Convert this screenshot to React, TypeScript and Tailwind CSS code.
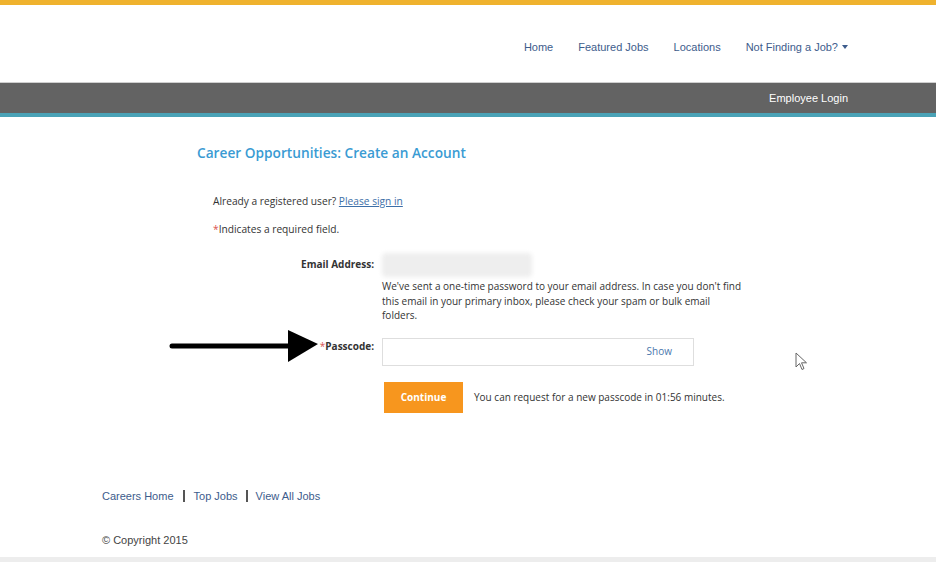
import React from "react";

const body = { fontFamily: '"Open Sans", "DejaVu Sans", sans-serif' };
const arial = { fontFamily: '"Liberation Sans", Arial, sans-serif' };

export default function App() {
  return (
    <div className="relative w-[936px] h-[562px] overflow-hidden bg-white flex flex-col">
      <div className="h-[5px] bg-[#efb22e]" />
      <header className="h-[77px] flex items-start justify-end pr-[88px] pt-[34px]" style={arial}>
        <nav className="flex items-center gap-[25px] text-[11px] text-[#3d5c8c]">
          <span>Home</span>
          <span>Featured Jobs</span>
          <span>Locations</span>
          <span className="flex items-center gap-[4px]">
            Not Finding a Job?
            <span className="inline-block w-0 h-0 border-l-[3px] border-r-[3px] border-t-[4px] border-l-transparent border-r-transparent border-t-[#3d5c8c]" />
          </span>
        </nav>
      </header>
      <div className="h-[1px] bg-[#cfcfcf]" />
      <div className="h-[30px] bg-[#636363] flex items-center justify-end pr-[88px]" style={arial}>
        <span className="text-[11px] text-white">Employee Login</span>
      </div>
      <div className="h-[4px] bg-[#4aa2b6]" />

      <main className="flex flex-col pl-[197px] pt-[27px]" style={body}>
        <h1 className="text-[13.7px] font-semibold text-[#3a9bd3] leading-[18px]">
          Career Opportunities: Create an Account
        </h1>
        <div className="pl-[16px] mt-[32px] text-[10.2px] text-[#333] leading-[14px]">
          <p>
            Already a registered user?{" "}
            <span className="text-[#3d6fa8] underline">Please sign in</span>
          </p>
          <p className="mt-[14px]">
            <span className="text-[#d9534f]">*</span>Indicates a required field.
          </p>
        </div>

        <div className="mt-[17px] flex flex-col text-[10px] text-[#333]">
          <div className="flex">
            <div className="w-[177px] text-right font-bold pt-[4px] leading-[14px]">Email Address:</div>
            <div className="ml-[8px] flex flex-col">
              <div className="w-[150px] h-[24px] rounded-[4px] bg-[#eeeeee] blur-[2px]" />
              <p className="mt-[2px] w-[364px] leading-[14.5px]">
                We've sent a one-time password to your email address. In case you don't find this email in your primary inbox, please check your spam or bulk email folders.
              </p>
            </div>
          </div>

          <div className="flex mt-[15px]">
            <div className="w-[177px] text-right font-bold pt-[1px] leading-[14px]">
              <span className="text-[#d9534f] font-normal">*</span>Passcode:
            </div>
            <div className="ml-[8px] w-[312px] h-[28px] border border-[#dedede] flex items-center justify-end pr-[21px]">
              <span className="text-[#4a78ad]">Show</span>
            </div>
          </div>

          <div className="flex items-center mt-[16px] pl-[187px]">
            <div className="w-[79px] h-[31px] bg-[#f7961e] flex items-center justify-center text-white font-bold text-[10px]">
              Continue
            </div>
            <span className="ml-[11px]">You can request for a new passcode in 01:56 minutes.</span>
          </div>
        </div>
      </main>

      <footer className="mt-auto flex flex-col pl-[102px]" style={arial}>
        <div className="flex items-center text-[11px] text-[#3d5c8c]">
          <span>Careers Home</span>
          <span className="mx-[9px] w-[2px] h-[12px] bg-[#555]" />
          <span>Top Jobs</span>
          <span className="mx-[8px] w-[2px] h-[12px] bg-[#555]" />
          <span>View All Jobs</span>
        </div>
        <div className="mt-[27px] mb-[9px] text-[11px] text-[#444]">© Copyright 2015</div>
      </footer>
      <div className="h-[5px] bg-[#ededed]" />

      {/* annotation arrow */}
      <svg className="absolute left-[168px] top-[328px]" width="152" height="36" viewBox="0 0 152 36">
        <line x1="4" y1="18" x2="122" y2="18" stroke="#000" strokeWidth="5" strokeLinecap="round" />
        <polygon points="120,2 150,16 120,34" fill="#000" />
      </svg>

      {/* mouse cursor */}
      <svg className="absolute left-[795px] top-[352px]" width="14" height="20" viewBox="0 0 14 20">
        <path d="M1 1 L1 15 L4.5 11.5 L7 17.5 L9 16.5 L6.5 10.8 L11.5 10.8 Z" fill="#fff" stroke="#666" strokeWidth="1" />
      </svg>
    </div>
  );
}
